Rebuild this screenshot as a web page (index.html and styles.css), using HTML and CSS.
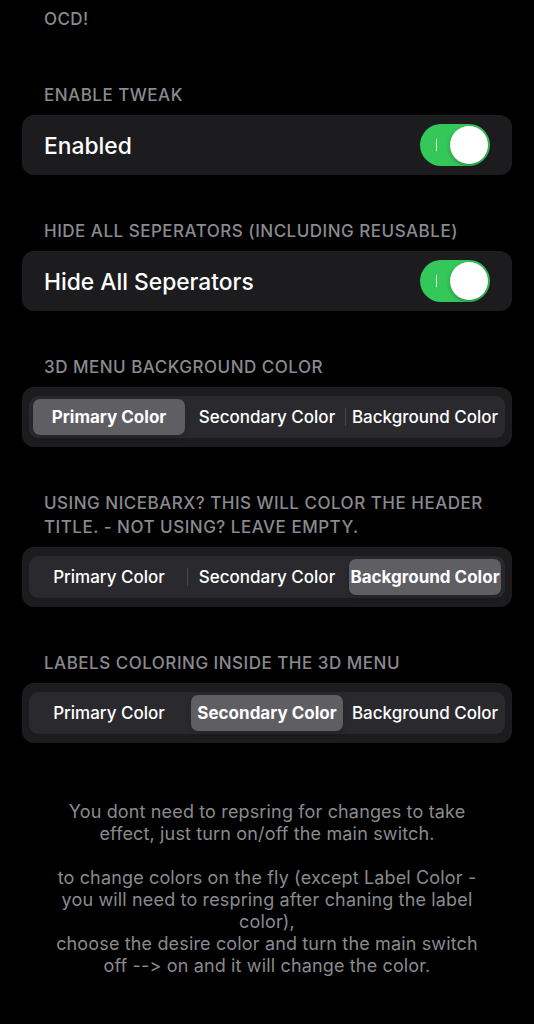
FILE: index.html
```html
<!DOCTYPE html>
<html>
<head>
<meta charset="utf-8">
<link rel="stylesheet" href="styles.css">
</head>
<body>
<div class="page">
  <div class="top-label">OCD!</div>

  <section class="group first">
    <div class="header">ENABLE TWEAK</div>
    <div class="card row">
      <span class="row-label">Enabled</span>
      <span class="switch"><span class="switch-mark"></span><span class="knob"></span></span>
    </div>
  </section>

  <section class="group">
    <div class="header">HIDE ALL SEPERATORS (INCLUDING REUSABLE)</div>
    <div class="card row">
      <span class="row-label">Hide All Seperators</span>
      <span class="switch"><span class="switch-mark"></span><span class="knob"></span></span>
    </div>
  </section>

  <section class="group">
    <div class="header">3D MENU BACKGROUND COLOR</div>
    <div class="card seg-card">
      <div class="segmented">
        <div class="seg selected">Primary Color</div>
        <div class="seg">Secondary Color</div>
        <div class="seg divided">Background Color</div>
      </div>
    </div>
  </section>

  <section class="group">
    <div class="header">USING NICEBARX? THIS WILL COLOR THE HEADER<br>TITLE. - NOT USING? LEAVE EMPTY.</div>
    <div class="card seg-card">
      <div class="segmented">
        <div class="seg">Primary Color</div>
        <div class="seg divided">Secondary Color</div>
        <div class="seg selected">Background Color</div>
      </div>
    </div>
  </section>

  <section class="group">
    <div class="header">LABELS COLORING INSIDE THE 3D MENU</div>
    <div class="card seg-card">
      <div class="segmented">
        <div class="seg">Primary Color</div>
        <div class="seg selected">Secondary Color</div>
        <div class="seg">Background Color</div>
      </div>
    </div>
  </section>

  <div class="footer">
    You dont need to repsring for changes to take<br>
    effect, just turn on/off the main switch.<br>
    <br>
    to change colors on the fly (except Label Color -<br>
    you will need to respring after chaning the label<br>
    color),<br>
    choose the desire color and turn the main switch<br>
    off --&gt; on and it will change the color.
  </div>
</div>
</body>
</html>
```

FILE: styles.css
```css
* { box-sizing: border-box; }

html, body {
  margin: 0;
  padding: 0;
  background: #000;
}

body {
  font-family: Inter, "Noto Sans", sans-serif;
  font-variant-ligatures: none;
  font-feature-settings: "calt" 0, "liga" 0;
  color: #fff;
  width: 534px;
  height: 1024px;
  overflow: hidden;
}

.page {
  padding: 7px 22px 0;
}

.top-label {
  padding-left: 22px;
  font-size: 17px;
  font-weight: 500;
  line-height: 24px;
  letter-spacing: 0.4px;
  color: #8a8a8f;
}

.group {
  margin-top: 44px;
}

.group.first {
  margin-top: 52px;
}

.header {
  padding-left: 22px;
  font-size: 17px;
  font-weight: 500;
  line-height: 24px;
  color: #8a8a8f;
  letter-spacing: 0.5px;
  margin-bottom: 8px;
}

.card {
  background: #1c1c1e;
  border-radius: 12px;
  height: 60px;
}

.row {
  display: flex;
  align-items: center;
  justify-content: space-between;
  padding: 0 22px;
}

.row-label {
  font-size: 22.8px;
  font-weight: 500;
  color: #fff;
}

.switch {
  position: relative;
  width: 70px;
  height: 42px;
  border-radius: 21px;
  background: #34c759;
  display: flex;
  align-items: center;
  justify-content: flex-end;
  padding-right: 2px;
}

.switch-mark {
  position: absolute;
  left: 16px;
  top: 15px;
  width: 1px;
  height: 12px;
  background: rgba(255,255,255,0.85);
}

.knob {
  width: 38px;
  height: 38px;
  border-radius: 50%;
  background: #fff;
  box-shadow: 0 2px 4px rgba(0,0,0,0.25);
}

.seg-card {
  padding: 9px 7px;
}

.segmented {
  display: flex;
  height: 42px;
  padding: 1px;
  background: #2a2a2e;
  border-radius: 9px;
}

.seg {
  position: relative;
  flex: 1;
  display: flex;
  align-items: center;
  justify-content: center;
  margin: 2px 3px;
  border-radius: 7px;
  font-size: 17px;
  font-weight: 500;
  color: #fff;
  white-space: nowrap;
}

.seg.selected {
  background: #5e5e63;
  font-weight: 700;
  box-shadow: 0 2px 6px rgba(0,0,0,0.2);
}

.seg.divided::before {
  content: "";
  position: absolute;
  left: -4px;
  top: 9px;
  bottom: 9px;
  width: 1px;
  background: #48484c;
}

.footer {
  margin-top: 58px;
  text-align: center;
  font-size: 18px;
  line-height: 22px;
  letter-spacing: 0.15px;
  color: #8a8a8f;
  white-space: nowrap;
}
```
